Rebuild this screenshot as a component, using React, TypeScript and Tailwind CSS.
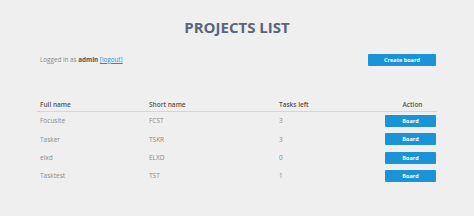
import React from 'react';

const PROJECTS = [
  { name: 'Focusite', short: 'FCST', left: 3 },
  { name: 'Tasker', short: 'TSKR', left: 3 },
  { name: 'elxd', short: 'ELXD', left: 0 },
  { name: 'Tasktest', short: 'TST', left: 1 },
];

const App: React.FC = () => {
  return (
    <div
      className="w-[474px] h-[216px] bg-[#efefef] overflow-hidden"
      style={{ fontFamily: '"Open Sans", sans-serif' }}
    >
      {/* Title */}
      <h1 className="pt-[15px] text-center text-[15px] leading-[24px] font-bold text-[#5b6479]">
        PROJECTS LIST
      </h1>

      {/* User bar */}
      <div className="mt-[14px] ml-[40px] w-[396px] flex items-center justify-between">
        <p className="text-[6.3px] text-[#888]">
          Logged in as <b className="text-[#555]">admin</b>{' '}
          <a href="#" className="text-[#1a94d6] underline">[logout]</a>
        </p>
        <button className="w-[68px] h-[12px] mt-[1px] bg-[#1a94d6] rounded-[1px] text-white text-[5.5px] font-bold leading-[12px]">
          Create board
        </button>
      </div>

      {/* Table */}
      <div className="mt-[32px] ml-[37px] w-[400px] text-[6.5px]">
        <div className="grid grid-cols-[109px_130px_106px_55px] h-[14px] items-center font-semibold text-[#555] border-b border-[#d6d6d6]">
          <span className="pl-[3px]">Full name</span>
          <span className="pl-[3px]">Short name</span>
          <span className="pl-[3px]">Tasks left</span>
          <span className="text-center pl-[6px]">Action</span>
        </div>
        {PROJECTS.map(p => (
          <div
            key={p.short}
            className="grid grid-cols-[109px_130px_106px_55px] h-[18.3px] items-center text-[#8a8a8a]"
          >
            <span className="pl-[3px]">{p.name}</span>
            <span className="pl-[3px]">{p.short}</span>
            <span className="pl-[3px]">{p.left}</span>
            <span className="flex justify-end pr-[1px]">
              <button className="w-[51px] h-[12px] bg-[#1a94d6] rounded-[1px] text-white text-[5.5px] font-bold leading-[12px]">
                Board
              </button>
            </span>
          </div>
        ))}
      </div>
    </div>
  );
};

export default App;
